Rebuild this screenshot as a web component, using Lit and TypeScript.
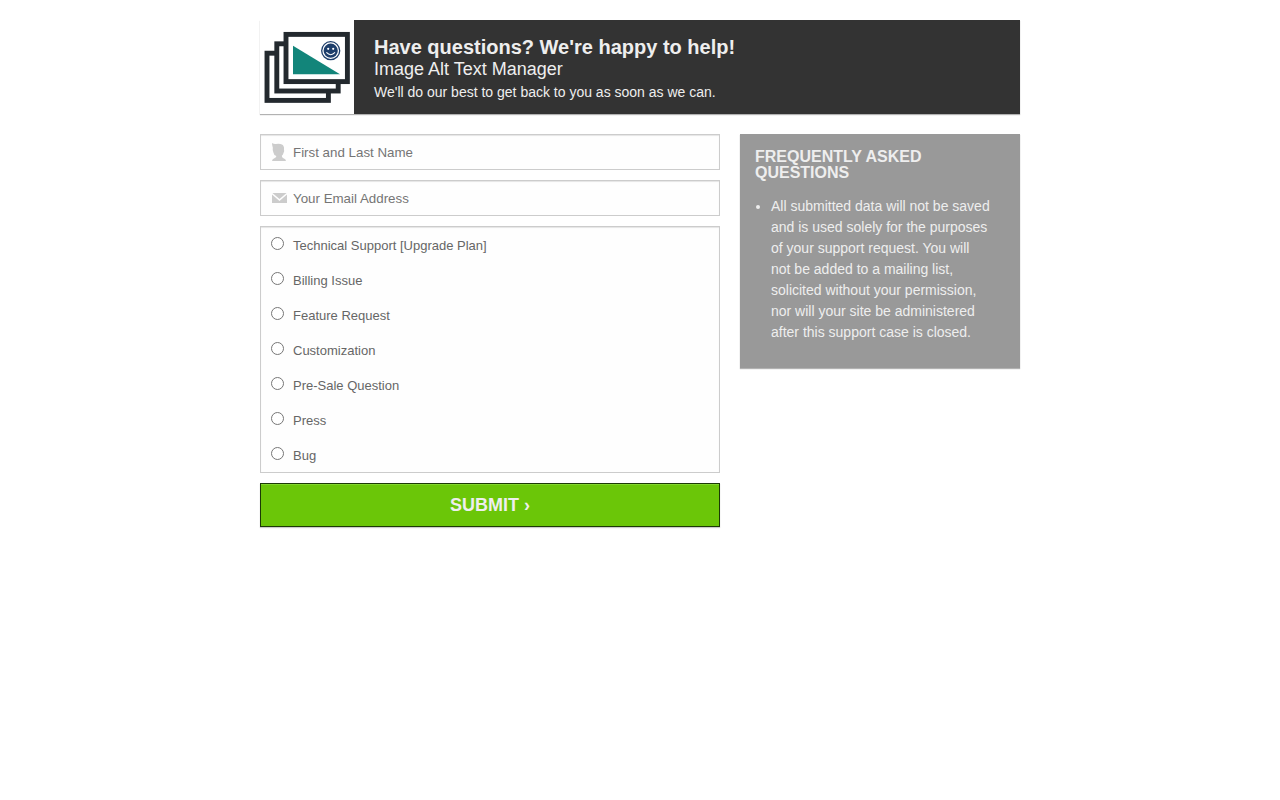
import { LitElement, html, css, svg } from "lit";
import { customElement } from "lit/decorators.js";

const TOPICS = [
  "Technical Support [Upgrade Plan]",
  "Billing Issue",
  "Feature Request",
  "Customization",
  "Pre-Sale Question",
  "Press",
  "Bug",
];

const frame = (x: number, y: number) => svg`
  <rect x=${x} y=${y} width="61.4" height="47.2" fill="#fff" stroke="#23292e" stroke-width="4.9" />
`;

@customElement("app-root")
export class AppRoot extends LitElement {
  static styles = css`
    :host {
      display: block;
      min-height: 100vh;
      box-sizing: border-box;
      padding: 20px;
      background: #fff;
      font-family: "Liberation Sans", Arial, Helvetica, sans-serif;
      color: #eee;
    }
    * {
      box-sizing: border-box;
    }
    .page {
      max-width: 760px;
      margin: 0 auto;
    }
    .banner {
      display: flex;
      background: #333;
      box-shadow: 0 1px 1px rgba(0, 0, 0, 0.3);
    }
    .logo {
      display: block;
      flex: none;
      width: 94px;
      height: 94px;
      background: #fff;
    }
    .intro {
      padding: 16px 20px 10px;
    }
    h1,
    h2,
    h3,
    p,
    ul {
      margin: 0;
    }
    h1 {
      font-size: 20px;
      line-height: 22px;
    }
    h2 {
      font-size: 18px;
      font-weight: normal;
      line-height: 22px;
    }
    .intro p {
      font-size: 14px;
      line-height: 24px;
    }
    .columns {
      display: flex;
      align-items: flex-start;
      gap: 20px;
      margin-top: 20px;
    }
    form {
      flex: 1;
      display: flex;
      flex-direction: column;
      gap: 10px;
    }
    .field,
    .topics {
      margin: 0;
      border: 1px solid #ccc;
      background: #fefefe;
      box-shadow: inset 0 1px 1px rgba(0, 0, 0, 0.1);
    }
    .field {
      display: flex;
      align-items: center;
      height: 36px;
      padding-left: 10px;
    }
    .field svg {
      flex: none;
      width: 16px;
      height: 18px;
      fill: #ccc;
    }
    .field input {
      flex: 1;
      min-width: 0;
      height: 34px;
      margin: 0;
      padding: 0 6px;
      border: 0;
      outline: 0;
      background: transparent;
      font-family: inherit;
      color: #666;
    }
    .field input::placeholder {
      color: #757575;
    }
    .topics {
      min-width: 0;
      padding: 0;
    }
    .topic {
      display: flex;
      align-items: flex-start;
      gap: 9px;
      padding: 10px;
      font-size: 13px;
      line-height: 15px;
      color: #666;
    }
    .topic input {
      flex: none;
      width: 13px;
      height: 13px;
      margin: 0;
    }
    .topic span {
      padding-top: 1px;
      margin-bottom: -1px;
    }
    button {
      height: 44px;
      padding: 0;
      border: 1px solid #1c3a05;
      background: #6bc608;
      box-shadow:
        inset 0 1px 0 #82d62c,
        0 1px 1px rgba(0, 0, 0, 0.2);
      font-family: inherit;
      font-size: 18px;
      font-weight: bold;
      color: #eee;
      text-transform: uppercase;
    }
    aside {
      flex: 0 0 280px;
      padding: 15px 15px 25px;
      background: #999;
      box-shadow: 0 1px 1px rgba(0, 0, 0, 0.3);
    }
    h3 {
      margin-bottom: 15px;
      font-size: 16px;
      line-height: 16px;
      text-transform: uppercase;
    }
    ul {
      padding: 0 14px 0 16px;
      font-size: 14px;
      line-height: 21px;
    }
  `;

  render() {
    return html`
      <div class="page">
        <header class="banner">
          <svg class="logo" viewBox="0 0 94 94" role="img" aria-label="Image Alt Text Manager logo">
            ${frame(7, 33.2)}${frame(16.8, 23.8)}${frame(26, 14.4)}
            <path d="M33 25.7V54.3H80z" fill="#12857a" />
            <circle cx="70.7" cy="30.7" r="9" fill="#fff" stroke="#1d3e6b" stroke-width="1.3" />
            <circle cx="70.7" cy="30.7" r="7.1" fill="#1d3e6b" />
            <circle cx="68.2" cy="28.8" r="1.1" fill="#fff" />
            <circle cx="73.2" cy="28.8" r="1.1" fill="#fff" />
            <path d="M66.4 32.4Q70.7 37 75 32.4" fill="none" stroke="#fff" stroke-width="1.1" />
          </svg>
          <div class="intro">
            <h1>Have questions? We're happy to help!</h1>
            <h2>Image Alt Text Manager</h2>
            <p>We'll do our best to get back to you as soon as we can.</p>
          </div>
        </header>
        <main class="columns">
          <form @submit=${(e: Event) => e.preventDefault()}>
            <div class="field">
              <svg viewBox="0 0 16 18" aria-hidden="true">
                <path
                  d="M1 0Q3 1.2 5 .9Q9 .2 11 1.6Q13.4 3 13 6.4Q13.6 8 12.5 10Q12 12 10.8 12.8Q10.8 14.6 12.4 15.3Q14.8 16 15 18H1Q1.2 16 3.4 15.3Q5.4 14.6 5.4 13Q2.8 12.4 2.4 9.5Q1.4 7 1.8 4.5Q1 2.5 1 0z"
                />
              </svg>
              <input type="text" name="name" aria-label="First and Last Name" placeholder="First and Last Name" />
            </div>
            <div class="field">
              <svg viewBox="0 0 16 18" aria-hidden="true">
                <path d="M1.4 4H15.6L8.5 10zM1 5.4L8.5 12L16 5.4V14H1z" />
              </svg>
              <input type="email" name="email" aria-label="Your Email Address" placeholder="Your Email Address" />
            </div>
            <fieldset class="topics" aria-label="Topic">
              ${TOPICS.map(
                (topic) => html`
                  <label class="topic">
                    <input type="radio" name="topic" .value=${topic} />
                    <span>${topic}</span>
                  </label>
                `
              )}
            </fieldset>
            <button type="submit">Submit ›</button>
          </form>
          <aside>
            <h3>Frequently Asked Questions</h3>
            <ul>
              <li>
                All submitted data will not be saved and is used solely for the purposes of your support
                request. You will not be added to a mailing list, solicited without your permission, nor
                will your site be administered after this support case is closed.
              </li>
            </ul>
          </aside>
        </main>
      </div>
    `;
  }
}
